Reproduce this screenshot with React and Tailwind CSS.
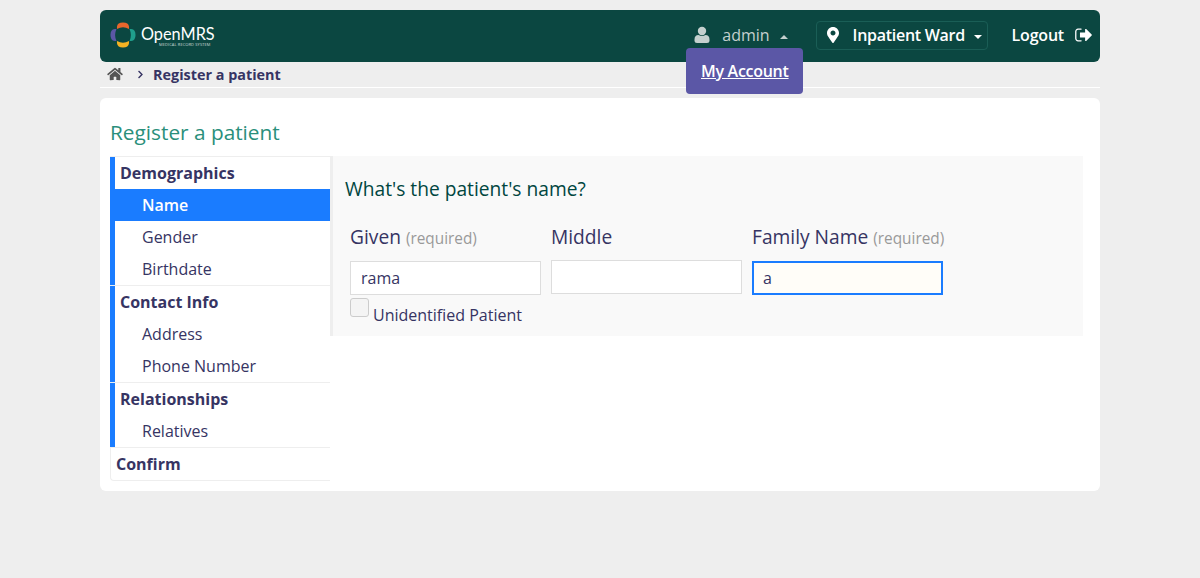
import { FaHome, FaChevronRight, FaMapMarkerAlt } from "react-icons/fa";

const Logo = () => (
  <svg width="26" height="26" viewBox="0 0 28 28" className="shrink-0">
    <path d="M7.500 5 Q8 0.500 14 0.500 Q20 0.500 20.500 5 L20.500 7.500 Q14 4 7.500 7.500 Z" fill="#e8662c" />
    <path d="M21 7.500 L23 7.500 Q27.500 8 27.500 14 Q27.500 20 23 20.500 L21 20.500 Q24 14 21 7.500 Z" fill="#1f9e8b" />
    <path d="M7.500 20.500 Q14 24 20.500 20.500 L20.500 23 Q20 27.500 14 27.500 Q8 27.500 7.500 23 Z" fill="#f4b223" />
    <path d="M7 7.500 Q4 14 7 20.500 L5 20.500 Q0.500 20 0.500 14 Q0.500 8 5 7.500 Z" fill="#5b57a6" />
  </svg>
);

const UserIcon = () => (
  <svg width="16" height="18" viewBox="0 0 16 17" fill="currentColor">
    <circle cx="8" cy="4.500" r="4.200" />
    <path d="M0.500 13 Q0.500 8.500 4.500 8.500 Q8 10.500 11.500 8.500 Q15.500 8.500 15.500 13 L15.500 14.500 Q15.500 16.500 13 16.500 L3 16.500 Q0.500 16.500 0.500 14.500 Z" />
  </svg>
);

const LogoutIcon = () => (
  <svg width="17" height="18" viewBox="0 0 1664 1792" fill="currentColor">
    <path d="M640 1440q0 4 1 20t.5 26.500-3 23.500-10 19.500-20.500 6.500h-320q-119 0-203.500-84.500t-84.500-203.500v-704q0-119 84.500-203.500t203.500-84.500h320q13 0 22.500 9.500t9.500 22.500q0 4 1 20t.5 26.500-3 23.500-10 19.500-20.500 6.500h-320q-66 0-113 47t-47 113v704q0 66 47 113t113 47h312l11.500 1 11.500 3 8 5.500 7 9 2 13.500zm1024-544q0 26-19 45l-544 544q-19 19-45 19t-45-19-19-45v-288h-448q-26 0-45-19t-19-45v-384q0-26 19-45t45-19h448v-288q0-26 19-45t45-19 45 19l544 544q19 19 19 45z" />
  </svg>
);

const sections = [
  { title: "Demographics", items: ["Name", "Gender", "Birthdate"], active: "Name" },
  { title: "Contact Info", items: ["Address", "Phone Number"] },
  { title: "Relationships", items: ["Relatives"] },
];

const Sidebar = () => (
  <div className="w-[220px] shrink-0 border-t border-[#eeeeee]">
    {sections.map((section) => (
      <div key={section.title} className="border-l-[5px] border-[#1a7cff]">
        <div className="h-8 pl-[5px] flex items-center text-base font-bold text-[#363463]">
          {section.title}
        </div>
        {section.items.map((item) => (
          <div
            key={item}
            className={
              item === section.active
                ? "h-8 pl-[27px] flex items-center text-base bg-[#1a7cff] text-white font-semibold"
                : "h-8 pl-[27px] flex items-center text-base text-[#363463]"
            }
          >
            {item}
          </div>
        ))}
        <div className="h-px bg-[#eeeeee] -ml-[5px]" />
      </div>
    ))}
    <div className="h-[33px] pl-[5px] flex items-center text-base font-bold text-[#363463] border-b border-l border-[#eeeeee] rounded-bl">
      Confirm
    </div>
  </div>
);

const Field = ({ label, required, value, focused, offset }) => (
  <div className="w-[191px]">
    <div className="h-[24px] flex items-baseline gap-[5px] text-[19.2px] leading-[24px] text-[#363463] whitespace-nowrap">
      {label}
      {required && <span className="text-[15.36px] text-[#999999]">(required)</span>}
    </div>
    <input
      readOnly
      value={value}
      className={
        (focused
          ? "border-2 border-[#1a7cff] bg-[#fffdf8] px-[9px] "
          : "border border-[#dddddd] bg-white px-[10px] ") +
        (offset ? "mt-[11px] " : "mt-[12px] ") +
        "block w-full h-[34px] text-base text-[#363463] outline-none"
      }
    />
  </div>
);

export default function App() {
  return (
    <div className="min-h-[578px] bg-[#eeeeee] pt-[10px] font-['Open_Sans',sans-serif]">
      <div className="w-[1000px] mx-auto">
        <header className="relative h-[52px] rounded-md bg-[#0b4741] flex items-center pl-[10px] pr-[8px] pb-[2px] text-white">
          <Logo />
          <div className="ml-[5px] flex flex-col items-start leading-none">
            <span className="font-['Lato',sans-serif] text-[16.3px] leading-[19px]">OpenMRS</span>
            <span className="ml-[18px] text-[4px] leading-[4px] tracking-[0.1px] whitespace-nowrap text-[#cfdcda]">MEDICAL RECORD SYSTEM</span>
          </div>
          <div className="ml-auto flex items-center text-[#c4d0ce]">
            <UserIcon />
            <span className="ml-[12px] text-base">admin</span>
            <span className="ml-[10px] mb-[-3px] w-0 h-0 border-x-[4px] border-x-transparent border-b-[4px] border-b-[#c4d0ce]" />
          </div>
          <div className="ml-[28px] w-[172px] h-[29px] rounded border border-[#1a5e56] flex items-center pl-[10px] font-semibold tracking-[-0.28px] text-base">
            <FaMapMarkerAlt className="w-[12px] h-[16px]" />
            <span className="ml-[14px]">Inpatient Ward</span>
            <span className="ml-[9px] mt-[3px] w-0 h-0 border-x-[4px] border-x-transparent border-t-[4px] border-t-white" />
          </div>
          <div className="ml-[24px] flex items-center font-semibold tracking-[-0.2px] text-base">
            Logout
            <span className="ml-[11px]"><LogoutIcon /></span>
          </div>
          <div className="absolute left-[586px] top-[38px] w-[117px] h-[46px] rounded bg-[#5b57a6] flex items-center pl-[15px] text-base font-semibold tracking-[-0.28px] underline text-white">
            My Account
          </div>
        </header>

        <div className="h-[26px] border-b border-white flex items-center pl-[7px] text-[#363463] text-[14.4px] font-bold">
          <FaHome className="w-[16px] h-[14px] text-[#555555] mb-[2px]" />
          <FaChevronRight className="ml-[13px] w-[9px] h-[9px]" />
          <span className="ml-[8px]">Register a patient</span>
        </div>

        <main className="mt-[10px] h-[393px] rounded-md bg-white pt-[20px] pl-[10px] pr-[17px]">
          <h2 className="h-[28px] text-[20.8px] leading-[28px] text-[#2a8f7b]">Register a patient</h2>
          <div className="mt-[10px] flex items-start">
            <Sidebar />
            <section className="flex-1 h-[180px] bg-[#f9f9f9] border-l-[3px] border-[#eeeeee] pl-3">
              <h3 className="mt-[19px] text-[19.2px] leading-[28px] text-[#00463f]">What's the patient's name?</h3>
              <div className="mt-[22px] pl-[5px] flex gap-[10px]">
                <Field label="Given" required value="rama" />
                <Field label="Middle" value="" offset />
                <Field label="Family Name" required value="a" focused />
              </div>
              <div className="mt-[3px] pl-[5px] flex items-start">
                <span className="w-[19px] h-[19px] rounded-[3px] border border-[#cccccc] bg-[#f4f4f4]" />
                <span className="ml-1 mt-[6px] text-base leading-[22px] text-[#363463]">Unidentified Patient</span>
              </div>
            </section>
          </div>
        </main>
      </div>
    </div>
  );
}
